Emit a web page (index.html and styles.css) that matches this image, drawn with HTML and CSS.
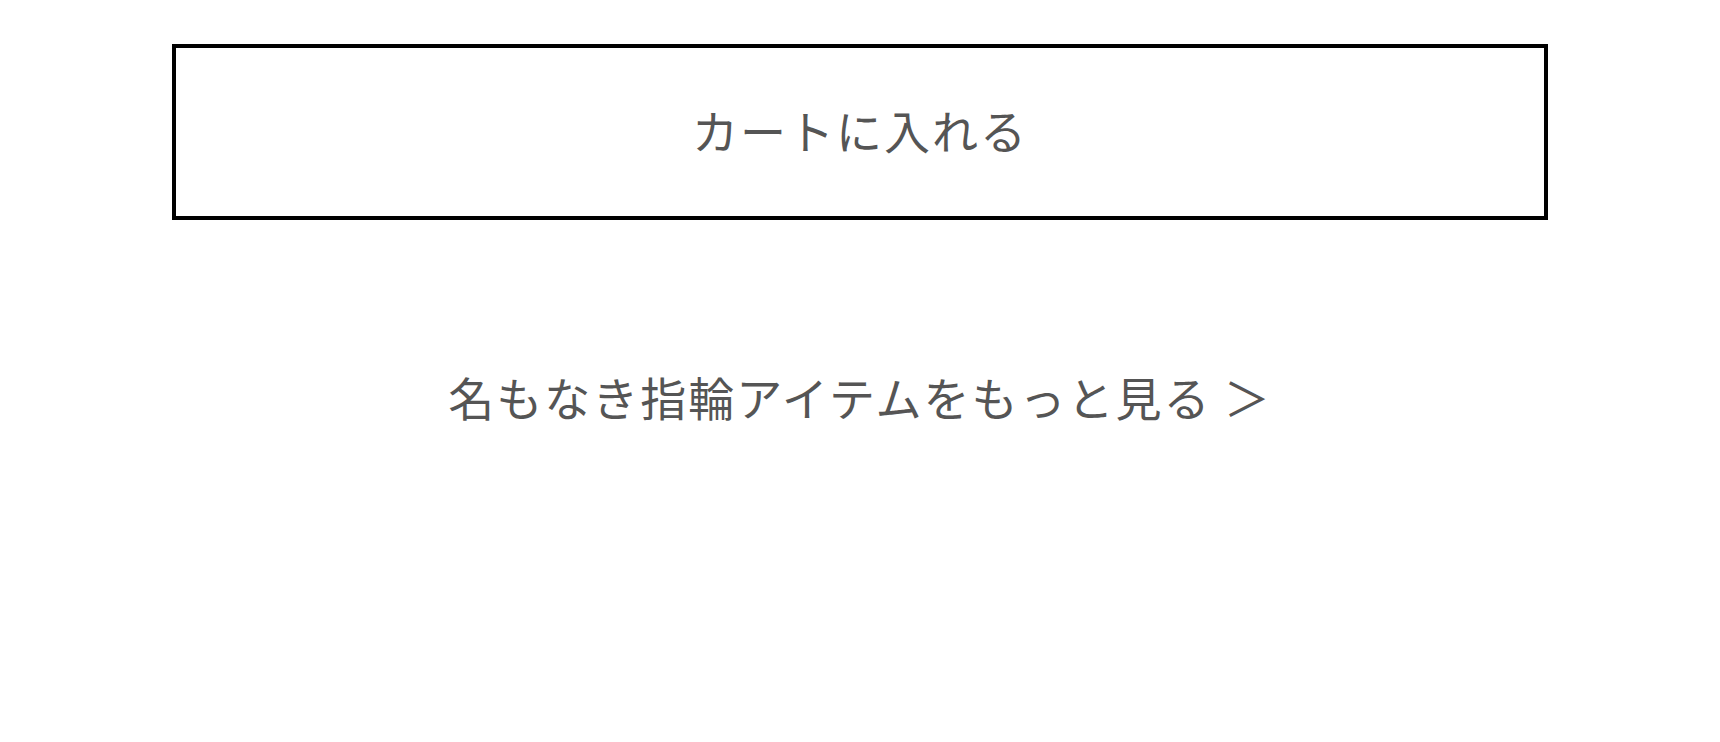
FILE: index.html
```html
<!DOCTYPE html>
<html lang="ja">
<head>
    <meta charset="UTF-8">
    <meta name="viewport" content="width=device-width, initial-scale=1.0">
    <title>名もなき指輪</title>
    <link rel="stylesheet" href="styles.css">
</head>
<body>
    <div class="container">
        <button class="cart-button">カートに入れる</button>

        <div class="more-items">
            <a href="#" class="more-link">名もなき指輪アイテムをもっと見る ＞</a>
        </div>
    </div>
</body>
</html>
```

FILE: styles.css
```css
body {
    font-family: "Noto Sans CJK JP", "Noto Sans", sans-serif;
    margin: 0;
    padding: 0;
    background-color: #fff;
    color: #555;
}
.container {
    padding-top: 44px;
    text-align: center;
}
.cart-button {
    display: flex;
    align-items: center;
    justify-content: center;
    width: 80%;
    height: 176px;
    margin: 0 auto;
    padding: 0 0 6px;
    border: 4px solid #000;
    background-color: #fff;
    color: #555;
    font-family: inherit;
    font-size: 46px;
    letter-spacing: 2px;
    cursor: pointer;
}
.more-items {
    margin-top: 142px;
}
.more-link {
    color: #555;
    text-decoration: none;
    font-size: 46px;
    letter-spacing: 2px;
    line-height: 1.5;
}
```
